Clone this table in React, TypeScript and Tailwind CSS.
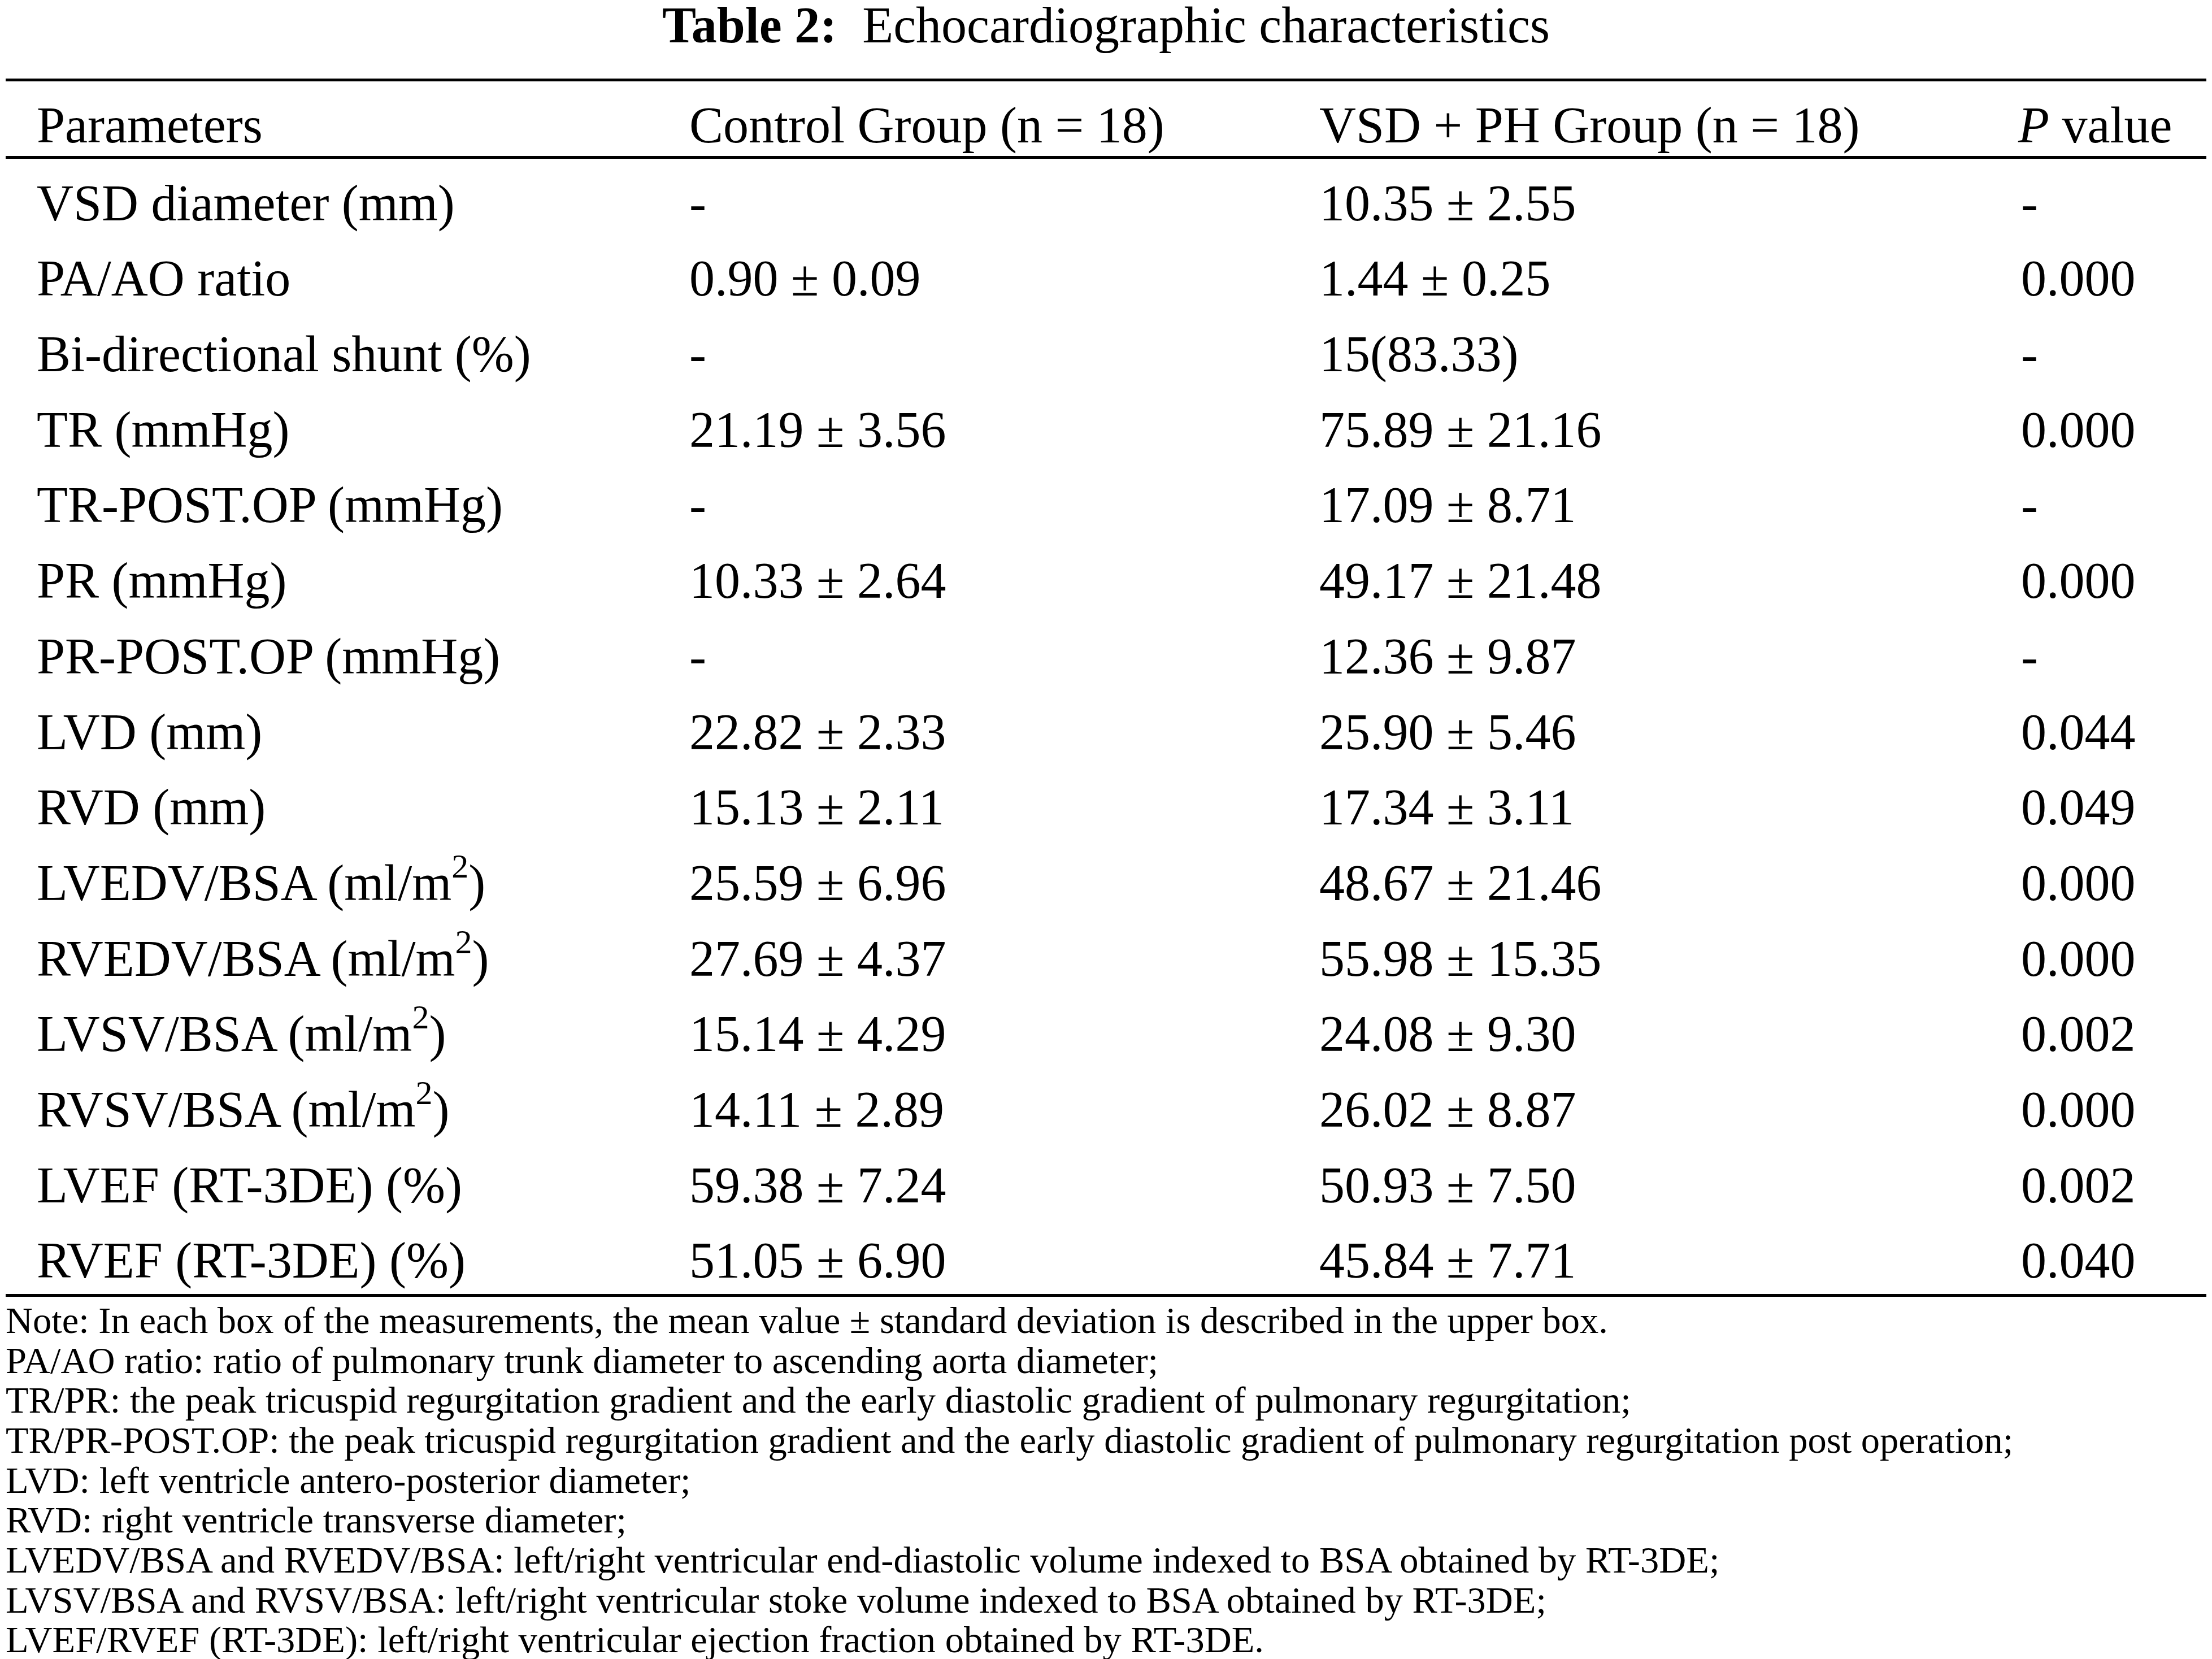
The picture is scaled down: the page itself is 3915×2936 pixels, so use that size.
import React from 'react';

type Row = {
  label: React.ReactNode;
  control: string;
  vsd: string;
  p: string;
};

const M2 = () => (
  <>
    (ml/m<span className="relative -top-[40px] text-[60px] leading-none">2</span>)
  </>
);

const rows: Row[] = [
  { label: 'VSD diameter (mm)', control: '-', vsd: '10.35 ± 2.55', p: '-' },
  { label: 'PA/AO ratio', control: '0.90 ± 0.09', vsd: '1.44 ± 0.25', p: '0.000' },
  { label: 'Bi-directional shunt (%)', control: '-', vsd: '15(83.33)', p: '-' },
  { label: 'TR (mmHg)', control: '21.19 ± 3.56', vsd: '75.89 ± 21.16', p: '0.000' },
  { label: 'TR-POST.OP (mmHg)', control: '-', vsd: '17.09 ± 8.71', p: '-' },
  { label: 'PR (mmHg)', control: '10.33 ± 2.64', vsd: '49.17 ± 21.48', p: '0.000' },
  { label: 'PR-POST.OP (mmHg)', control: '-', vsd: '12.36 ± 9.87', p: '-' },
  { label: 'LVD (mm)', control: '22.82 ± 2.33', vsd: '25.90 ± 5.46', p: '0.044' },
  { label: 'RVD (mm)', control: '15.13 ± 2.11', vsd: '17.34 ± 3.11', p: '0.049' },
  { label: <>LVEDV/BSA <M2 /></>, control: '25.59 ± 6.96', vsd: '48.67 ± 21.46', p: '0.000' },
  { label: <>RVEDV/BSA <M2 /></>, control: '27.69 ± 4.37', vsd: '55.98 ± 15.35', p: '0.000' },
  { label: <>LVSV/BSA <M2 /></>, control: '15.14 ± 4.29', vsd: '24.08 ± 9.30', p: '0.002' },
  { label: <>RVSV/BSA <M2 /></>, control: '14.11 ± 2.89', vsd: '26.02 ± 8.87', p: '0.000' },
  { label: 'LVEF (RT-3DE) (%)', control: '59.38 ± 7.24', vsd: '50.93 ± 7.50', p: '0.002' },
  { label: 'RVEF (RT-3DE) (%)', control: '51.05 ± 6.90', vsd: '45.84 ± 7.71', p: '0.040' },
];

const notes = [
  'Note: In each box of the measurements, the mean value ± standard deviation is described in the upper box.',
  'PA/AO ratio: ratio of pulmonary trunk diameter to ascending aorta diameter;',
  'TR/PR: the peak tricuspid regurgitation gradient and the early diastolic gradient of pulmonary regurgitation;',
  'TR/PR-POST.OP: the peak tricuspid regurgitation gradient and the early diastolic gradient of pulmonary regurgitation post operation;',
  'LVD: left ventricle antero-posterior diameter;',
  'RVD: right ventricle transverse diameter;',
  'LVEDV/BSA and RVEDV/BSA: left/right ventricular end-diastolic volume indexed to BSA obtained by RT-3DE;',
  'LVSV/BSA and RVSV/BSA: left/right ventricular stoke volume indexed to BSA obtained by RT-3DE;',
  'LVEF/RVEF (RT-3DE): left/right ventricular ejection fraction obtained by RT-3DE.',
];

const gridCols = 'grid grid-cols-[1155px_1115px_1242px_1fr] pl-[55px]';

const App: React.FC = () => {
  return (
    <div className="w-[3915px] h-[2936px] overflow-hidden bg-white text-black font-['Liberation_Serif','Times_New_Roman',serif]">
      <h1 className="text-center text-[90px] leading-[90px] font-normal whitespace-pre mb-[49px]">
        <span className="font-bold">Table 2:</span>  Echocardiographic characteristics
      </h1>

      <div className="mx-[10px]">
        <div className="h-[5px] bg-black" />
        <div className={`${gridCols} text-[90px] leading-[109px] pt-[23px] whitespace-nowrap`}>
          <div>Parameters</div>
          <div>Control Group (n = 18)</div>
          <div>VSD + PH Group (n = 18)</div>
          <div className="-ml-[5px]">
            <span className="italic">P</span> value
          </div>
        </div>
        <div className="h-[5px] bg-black" />

        <div className="flex flex-col gap-[17.7px] pt-[20.7px] pb-[0.5px]">
          {rows.map((r, i) => (
            <div key={i} className={`${gridCols} text-[90px] leading-[116px] whitespace-nowrap`}>
              <div>{r.label}</div>
              <div>{r.control}</div>
              <div>{r.vsd}</div>
              <div>{r.p}</div>
            </div>
          ))}
        </div>
        <div className="h-[5px] bg-black" />

        <div className="pt-[7px] text-[66.5px] leading-[70.7px] whitespace-nowrap">
          {notes.map((n, i) => (
            <p key={i}>{n}</p>
          ))}
        </div>
      </div>
    </div>
  );
};

export default App;
